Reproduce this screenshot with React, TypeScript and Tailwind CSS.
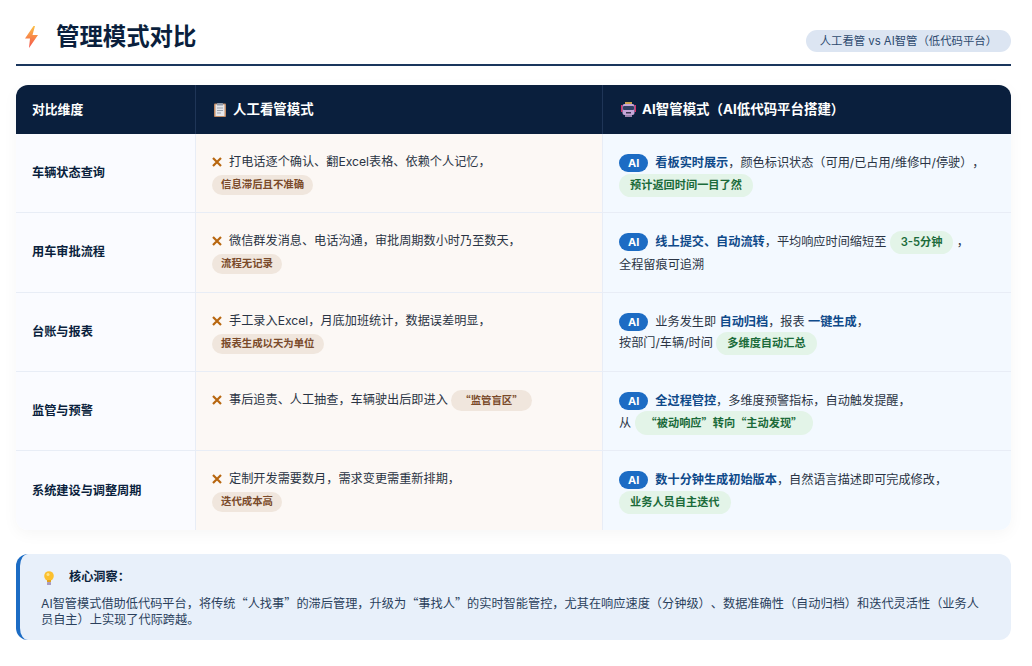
const FONT = "font-['Inter','Noto_Sans_CJK_SC',sans-serif] [text-spacing-trim:space-all]";

// curly quotes come from the CJK face so they stay full width
const Q = ({ children }: { children: React.ReactNode }) => (
  <span className="font-['Noto_Sans_CJK_SC',sans-serif]">{children}</span>
);

const Bad = ({ children }: { children: React.ReactNode }) => (
  <span className="inline-block rounded-full bg-[#f0e6dd] px-[9px] py-[2px] text-[10.4px] leading-[16px] font-semibold text-[#7a4a2a]">
    {children}
  </span>
);

const Good = ({ children }: { children: React.ReactNode }) => (
  <span className="inline-block rounded-full bg-[#e3f4e8] px-[11px] py-[3px] text-[11.2px] leading-[17px] font-semibold text-[#1b6b3a]">
    {children}
  </span>
);

const Ai = () => (
  <span className="mr-[7px] inline-block rounded-full bg-[#1c6cc4] px-[9px] text-[11px] leading-[18px] font-bold text-white">AI</span>
);

const B = ({ children }: { children: React.ReactNode }) => (
  <strong className="font-semibold text-[#0f4a8a]">{children}</strong>
);

const X = () => (
  <svg viewBox="0 0 10 10" className="mr-[7px] inline-block h-[10px] w-[10px] align-[-1px]">
    <path d="M1 1 9 9M9 1 1 9" stroke="#b8660f" strokeWidth="2.2" fill="none" />
  </svg>
);

const Bolt = () => (
  <svg viewBox="0 0 13 22" className="h-[22px] w-[13px]">
    <defs>
      <linearGradient id="bolt" x1="0" y1="0" x2="0" y2="1">
        <stop offset="0" stopColor="#fbbf45" />
        <stop offset="1" stopColor="#f4524d" />
      </linearGradient>
    </defs>
    <path d="M8.5 0 0 12.5h5L4 22 13 9H7.5L10 0Z" fill="url(#bolt)" />
  </svg>
);

const Clipboard = () => (
  <svg viewBox="0 0 12 14" className="h-[14px] w-[12px]">
    <rect x="0" y="0.5" width="12" height="13.5" rx="1" fill="#c08a63" />
    <rect x="1.5" y="1.5" width="9" height="11.5" fill="#e6e6ea" />
    <rect x="3" y="0" width="6" height="2.5" rx="0.5" fill="#8f98a6" />
    <path d="M3 5h6M3 7.5h6M3 10h4" stroke="#9aa2ae" strokeWidth="1" />
  </svg>
);

const Robot = () => (
  <svg viewBox="0 0 15 15" className="h-[15px] w-[15px]">
    <rect x="0" y="3" width="1.5" height="7" fill="#d8316b" />
    <rect x="13.5" y="3" width="1.5" height="7" fill="#d8316b" />
    <rect x="4" y="0" width="7" height="2" fill="#c9a24f" />
    <rect x="1.5" y="2" width="12" height="11" rx="2" fill="#c5a6d8" />
    <rect x="2" y="4" width="11" height="4" rx="1" fill="#2f3f63" />
    <rect x="5" y="10" width="5" height="1.5" fill="#3a3550" />
    <rect x="4" y="13" width="7" height="2" fill="#9b84ad" />
  </svg>
);

const Bulb = () => (
  <svg viewBox="0 0 10 14" className="h-[14px] w-[10px]">
    <circle cx="5" cy="5" r="4.8" fill="#fcc02e" />
    <circle cx="4" cy="3.5" r="1.5" fill="#ffe48a" />
    <rect x="3" y="9" width="4" height="2" fill="#e3a21a" />
    <rect x="3" y="11" width="4" height="3" rx="0.5" fill="#a99cc0" />
  </svg>
);

const rows: { name: string; manual: React.ReactNode; ai: React.ReactNode }[] = [
  {
    name: '车辆状态查询',
    manual: (
      <>
        <X />打电话逐个确认、翻Excel表格、依赖个人记忆，<br />
        <Bad>信息滞后且不准确</Bad>
      </>
    ),
    ai: (
      <>
        <Ai /><B>看板实时展示</B>，颜色标识状态（可用/已占用/维修中/停驶），<br />
        <Good>预计返回时间一目了然</Good>
      </>
    ),
  },
  {
    name: '用车审批流程',
    manual: (
      <>
        <X />微信群发消息、电话沟通，审批周期数小时乃至数天，<br />
        <Bad>流程无记录</Bad>
      </>
    ),
    ai: (
      <>
        <Ai /><B>线上提交、自动流转</B>，平均响应时间缩短至 <Good>3-5分钟</Good> ，<br />
        全程留痕可追溯
      </>
    ),
  },
  {
    name: '台账与报表',
    manual: (
      <>
        <X />手工录入Excel，月底加班统计，数据误差明显，<br />
        <Bad>报表生成以天为单位</Bad>
      </>
    ),
    ai: (
      <>
        <Ai />业务发生即 <B>自动归档</B>，报表 <B>一键生成</B>，<br />
        按部门/车辆/时间 <Good>多维度自动汇总</Good>
      </>
    ),
  },
  {
    name: '监管与预警',
    manual: (
      <>
        <X />事后追责、人工抽查，车辆驶出后即进入 <Bad><Q>“</Q>监管盲区<Q>”</Q></Bad>
      </>
    ),
    ai: (
      <>
        <Ai /><B>全过程管控</B>，多维度预警指标，自动触发提醒，<br />
        从 <Good><Q>“</Q>被动响应<Q>”</Q>转向<Q>“</Q>主动发现<Q>”</Q></Good>
      </>
    ),
  },
  {
    name: '系统建设与调整周期',
    manual: (
      <>
        <X />定制开发需要数月，需求变更需重新排期，<br />
        <Bad>迭代成本高</Bad>
      </>
    ),
    ai: (
      <>
        <Ai /><B>数十分钟生成初始版本</B>，自然语言描述即可完成修改，<br />
        <Good>业务人员自主迭代</Good>
      </>
    ),
  },
];

export default function App() {
  return (
    <div className={`h-[666px] w-[1032px] overflow-hidden bg-white pr-[21px] pl-4 ${FONT}`}>
      {/* Title */}
      <div className="flex h-[66px] items-end justify-between border-b-2 border-[#1a365d] pb-[12px]">
        <h1 className="-mb-px flex items-center gap-[18px] pl-[9px] text-[23.4px] leading-[32px] font-bold text-[#0a1f3d]">
          <Bolt />
          <span>管理模式对比</span>
        </h1>
        <span className="rounded-full bg-[#dce5f2] px-[14px] text-[11.36px] leading-[22px] text-[#2d4a6f]">
          人工看管 vs AI智管（低代码平台）
        </span>
      </div>

      {/* Comparison table */}
      <div className="mt-[19px] overflow-hidden rounded-xl shadow-[0_4px_16px_rgba(0,0,0,0.04)]">
        <div className="grid h-[49px] grid-cols-[180px_407px_1fr] bg-[#0a1f3d] text-[13.44px] font-bold text-white">
          <div className="flex items-center border-r border-[#1f3557] pl-4 text-[12.8px]">对比维度</div>
          <div className="flex items-center gap-[7px] border-r border-[#1f3557] pl-[18px]">
            <Clipboard />人工看管模式
          </div>
          <div className="flex items-center gap-[6px] pl-[18px]">
            <Robot />AI智管模式（AI低代码平台搭建）
          </div>
        </div>
        {rows.map((r, i) => (
          <div
            key={r.name}
            className={`grid h-[79.3px] grid-cols-[180px_407px_1fr] text-[12.16px] text-[#2a3444] ${i < rows.length - 1 ? 'border-b border-[#e8edf6]' : ''}`}
          >
            <div className="flex items-center border-r border-[#e8edf6] bg-[#fafbff] pl-4 font-semibold text-[#0a1f3d]">
              {r.name}
            </div>
            <div className="border-r border-[#e8edf6] bg-[#fcf8f5] pt-[17px] pl-4 leading-[22px]">{r.manual}</div>
            <div className="bg-[#f3f9ff] pt-[18px] pl-4 leading-[21.5px]">{r.ai}</div>
          </div>
        ))}
      </div>

      {/* Insight */}
      <div className="mt-[24px] h-[86px] rounded-xl border-l-4 border-[#1c6cc4] bg-[#e8f0fa] pt-[14px] pr-[27px] pl-[21px] text-[#2a3f5c]">
        <div className="flex items-center gap-[15px] pl-[3px] text-[12.16px] font-semibold text-[#0a1f3d]">
          <Bulb />核心洞察：
        </div>
        <p className="mt-[8px] text-[12.2px] leading-[16px]">
          AI智管模式借助低代码平台，将传统<Q>“</Q>人找事<Q>”</Q>的滞后管理，升级为<Q>“</Q>事找人<Q>”</Q>的实时智能管控，尤其在响应速度（分钟级）、数据准确性（自动归档）和迭代灵活性（业务人员自主）上实现了代际跨越。
        </p>
      </div>
    </div>
  );
}
